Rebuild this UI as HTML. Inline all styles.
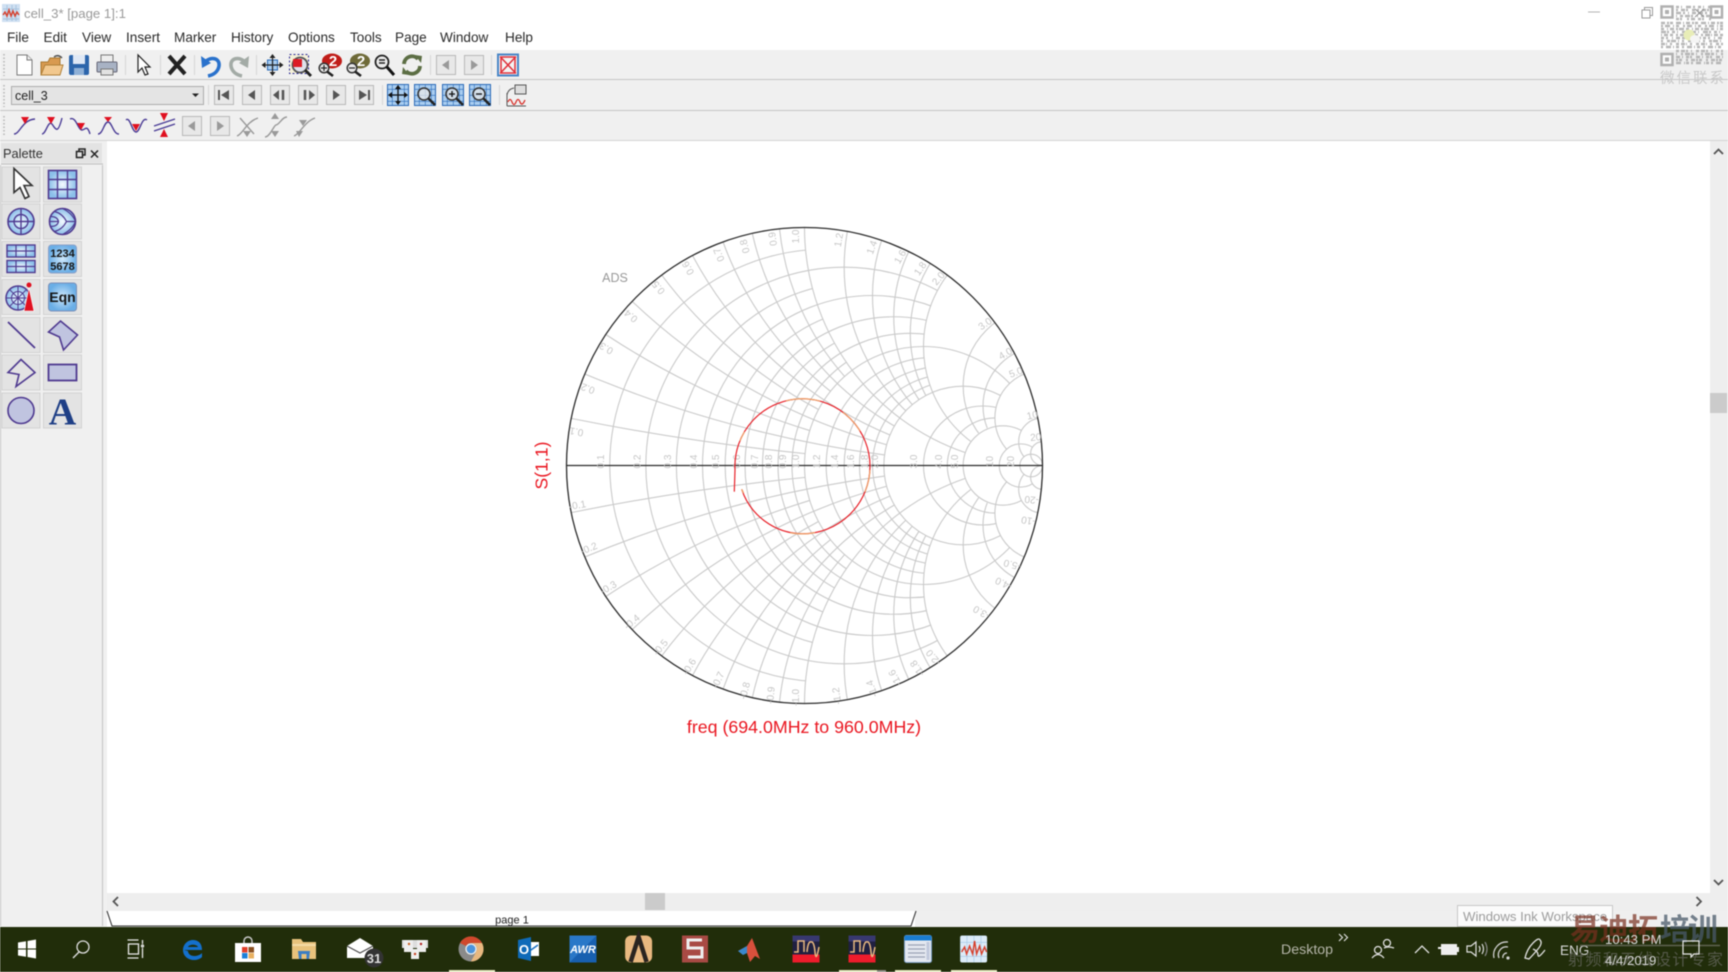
<!DOCTYPE html>
<html lang="en"><head><meta charset="utf-8"><title>cell_3* [page 1]:1</title>
<style>
html,body{margin:0;padding:0;background:#fff;width:1728px;height:972px;overflow:hidden}
svg{display:block;filter:blur(.4px)}
text{font-family:"Liberation Sans","Noto Sans CJK SC",sans-serif}
.m{font-size:13.6px;fill:#2a2a2a}
.g circle,.g path{fill:none;stroke:#cacaca;stroke-width:1.1;vector-effect:non-scaling-stroke}
.l text{font-size:10px;fill:#c6c6c6;text-anchor:middle}
.tb{font-size:13.2px;fill:#d8d8d8}
</style></head><body>
<svg width="1728" height="972" viewBox="0 0 1728 972" xmlns="http://www.w3.org/2000/svg">
<defs>
<radialGradient id="lb"><stop offset="0" stop-color="#f4faff"/><stop offset="1" stop-color="#8cc0ea"/></radialGradient>
<radialGradient id="lb2"><stop offset="0" stop-color="#cfe8fb"/><stop offset="1" stop-color="#6aaee6"/></radialGradient>
<pattern id="gr" width="6" height="6" patternUnits="userSpaceOnUse"><rect width="6" height="6" fill="#a9cdf0"/><path d="M0 0H6M0 0V6" stroke="#2a6ab8" stroke-width="1.2"/></pattern>
<pattern id="wg" width="7" height="7" patternUnits="userSpaceOnUse"><rect width="7" height="7" fill="#dcebf8"/><path d="M0 0H7M0 0V7" stroke="#a9cbe8" stroke-width="1.4"/></pattern>
<clipPath id="uc"><circle r="1"/></clipPath>
<clipPath id="x1"><path clip-rule="evenodd" d="M-2-2H2V2H-2ZM0 1a1 1 0 1 0 2 0a1 1 0 1 0-2 0ZM0-1a1 1 0 1 0 2 0a1 1 0 1 0-2 0Z"/></clipPath>
<clipPath id="x2"><path clip-rule="evenodd" d="M-2-2H2V2H-2ZM.5 .5a.5 .5 0 1 0 1 0a.5 .5 0 1 0-1 0ZM.5-.5a.5 .5 0 1 0 1 0a.5 .5 0 1 0-1 0Z"/></clipPath>
<clipPath id="x5"><path clip-rule="evenodd" d="M-2-2H2V2H-2ZM.8 .2a.2 .2 0 1 0 .4 0a.2 .2 0 1 0-.4 0ZM.8-.2a.2 .2 0 1 0 .4 0a.2 .2 0 1 0-.4 0Z"/></clipPath>
<clipPath id="x10"><path clip-rule="evenodd" d="M-2-2H2V2H-2ZM.9 .1a.1 .1 0 1 0 .2 0a.1 .1 0 1 0-.2 0ZM.9-.1a.1 .1 0 1 0 .2 0a.1 .1 0 1 0-.2 0Z"/></clipPath>
<clipPath id="x20"><path clip-rule="evenodd" d="M-2-2H2V2H-2ZM.95 .05a.05 .05 0 1 0 .1 0a.05 .05 0 1 0-.1 0ZM.95-.05a.05 .05 0 1 0 .1 0a.05 .05 0 1 0-.1 0Z"/></clipPath>
<clipPath id="r2"><path clip-rule="evenodd" d="M-2-2H2V2H-2ZM.3333 0a.3333 .3333 0 1 0 .6667 0a.3333 .3333 0 1 0-.6667 0Z"/></clipPath>
<clipPath id="r5"><path clip-rule="evenodd" d="M-2-2H2V2H-2ZM.6667 0a.1667 .1667 0 1 0 .3333 0a.1667 .1667 0 1 0-.3333 0Z"/></clipPath>
<clipPath id="r10"><path clip-rule="evenodd" d="M-2-2H2V2H-2ZM.8182 0a.0909 .0909 0 1 0 .1818 0a.0909 .0909 0 1 0-.1818 0Z"/></clipPath>
<clipPath id="r20"><path clip-rule="evenodd" d="M-2-2H2V2H-2ZM.9048 0a.0476 .0476 0 1 0 .0952 0a.0476 .0476 0 1 0-.0952 0Z"/></clipPath>
<symbol id="btn" overflow="visible"><rect x="-9.5" y="-9.5" width="19" height="19" fill="#e8e8e8" stroke="#b8b8b8"/></symbol>
<symbol id="mag" overflow="visible"><circle cx="-1" cy="-1" r="6" fill="#e8e8e8" fill-opacity=".75" stroke="#333" stroke-width="1.5"/><path d="M3.5 3.5L10 10" stroke="#222" stroke-width="2.6"/></symbol>
<symbol id="pal" overflow="visible"><rect x="-19" y="-17.5" width="38" height="35" fill="#e3e3e3" stroke="#d2d2d2"/></symbol>
</defs>

<rect width="1728" height="972" fill="#fff"/>

<!-- title bar -->
<g transform="translate(2 4)"><rect width="18" height="18" fill="#cfe0f2"/><path d="M1 5H17M1 10H17M1 15H17M5 1V17M10 1V17M14 1V17" stroke="#a9c4df"/><path d="M1 11L3 8L5 12L7 6L9 12L11 7L13 12L15 8L17 11" fill="none" stroke="#d9402c" stroke-width="1.4"/></g>
<text x="24" y="18" font-size="13.2" fill="#9a9a9a">cell_3* [page 1]:1</text>
<path d="M1588 12H1600" stroke="#b4b4b4"/>
<path d="M1642 10h8v8h-8zM1644.500 10V7.500h8v8h-2.500" fill="none" stroke="#9a9a9a"/>

<!-- menu -->
<text class="m" x="7" y="42">File</text><text class="m" x="43.500" y="42">Edit</text><text class="m" x="82" y="42">View</text><text class="m" x="126" y="42">Insert</text><text class="m" x="174" y="42">Marker</text><text class="m" x="231" y="42">History</text><text class="m" x="288" y="42">Options</text><text class="m" x="350" y="42">Tools</text><text class="m" x="395" y="42">Page</text><text class="m" x="440" y="42">Window</text><text class="m" x="505" y="42">Help</text>

<!-- toolbars -->
<rect y="50" width="1728" height="91" fill="#f0f0f0"/>
<path d="M0 79.500H1728M0 110.500H1728" stroke="#c6c6c6"/><path d="M0 140.500H1728" stroke="#d4d4d4"/>
<path d="M4 54V76M4 85V107M4 116V137" stroke="#b4b4b4" stroke-dasharray="1.500 2" stroke-width="1.500"/>
<path d="M125.500 55V75M160.500 55V75M194.500 55V75M256.500 55V75M430.500 55V75M491.500 55V75M208.500 85V105M382.500 85V105M499.500 85V105" stroke="#d6d6d6"/>

<!-- toolbar 1 -->
<g transform="translate(24 65)"><path d="M-7-10H3L8-5V10H-7Z" fill="#fff" stroke="#7a7a7a"/><path d="M3-10V-5H8" fill="#eee" stroke="#7a7a7a"/></g>
<g transform="translate(52 65)"><path d="M-11-3H-4L-2-7H8V9H-11Z" fill="#d89a50" stroke="#a87830"/><path d="M-11 10L-7 0H11L8 10Z" fill="#f2c88e" stroke="#b08038"/><path d="M2-8Q6-11 10-7" fill="none" stroke="#555" stroke-width="1.500"/></g>
<g transform="translate(79 65)"><rect x="-10" y="-10" width="20" height="20" rx="2" fill="#2c65ab"/><rect x="-6" y="-10" width="12" height="9" fill="#dfe8f5"/><rect x="-5" y="3" width="10" height="7" fill="#8fb0d6"/></g>
<g transform="translate(107 65)"><rect x="-6" y="-10" width="12" height="8" fill="#eee" stroke="#777"/><rect x="-10" y="-3" width="20" height="10" rx="1" fill="#a8b2c4" stroke="#667"/><rect x="-6" y="4" width="12" height="6" fill="#e2e2e2" stroke="#777"/></g>
<g transform="translate(143 65)"><path d="M-5-10V7L-1 3L2 10L5 9L2 2L7 2Z" fill="#fff" stroke="#222" stroke-width="1.200"/></g>
<g transform="translate(177 65)"><path d="M-8-9L8 9M8-9L-8 9" stroke="#222" stroke-width="4"/></g>
<g transform="translate(211 65)"><path d="M-6-3C0-9 9-7 8 1C7 7 2 10-3 11" fill="none" stroke="#2a72cc" stroke-width="3.600"/><path d="M-10-9L-9 3L0-2Z" fill="#2a72cc"/></g>
<g transform="translate(239 65)"><path d="M6-3C0-9-9-7-8 1C-7 7-2 10 3 11" fill="none" stroke="#a3aba6" stroke-width="3.600"/><path d="M10-9L9 3L0-2Z" fill="#a3aba6"/></g>
<g transform="translate(272.500 65)"><rect x="-5" y="-5" width="10" height="10" fill="url(#gr)" stroke="#2a6ab8"/><path d="M-9 0H9M0-9V9" stroke="#222" stroke-width="1.200"/><path d="M-11 0L-7-3V3ZM11 0L7-3V3ZM0-11L-3-7H3ZM0 11L-3 7H3Z" fill="#222"/></g>
<g transform="translate(300 65)"><rect x="-10.500" y="-10.500" width="19" height="19" fill="#f4f0d8" stroke="#2a2a9a" stroke-dasharray="2 2"/><circle cx="0" cy="0" r="7.500" fill="#dfe2ec" stroke="#555" stroke-width="1.800"/><path d="M-7-6H2V2H-7Z" fill="#dc1c24"/><path d="M5 5L11 11" stroke="#222" stroke-width="2.800"/></g>
<g transform="translate(329 65)"><ellipse cx="3" cy="-4" rx="10" ry="7.500" fill="#c01c18"/><text x="4" y="1" font-size="15" font-weight="bold" fill="#fff" text-anchor="middle">2</text><circle cx="-5" cy="3" r="4.800" fill="#e8e8e8" stroke="#333" stroke-width="1.500"/><path d="M-8 3H-2M-5 0V6" stroke="#222" stroke-width="1.200"/><path d="M-2 6.500L4 11" stroke="#222" stroke-width="2.600"/></g>
<g transform="translate(357 65)"><ellipse cx="3" cy="-4" rx="10" ry="7.500" fill="#6e6a38"/><text x="4" y="1" font-size="15" font-weight="bold" fill="#fff" text-anchor="middle">2</text><circle cx="-5" cy="3" r="4.800" fill="#e8e8e8" stroke="#333" stroke-width="1.500"/><path d="M-8 3H-2" stroke="#222" stroke-width="1.200"/><path d="M-2 6.500L4 11" stroke="#222" stroke-width="2.600"/></g>
<g transform="translate(384 65)"><circle cx="-2" cy="-3" r="6.500" fill="#ececec" stroke="#222" stroke-width="1.800"/><path d="M-5-5H1M-5-2H1" stroke="#222" stroke-width="1.400"/><path d="M3 2L10 10" stroke="#111" stroke-width="3"/></g>
<g transform="translate(412 65)" fill="none" stroke="#5c6e44" stroke-width="3.800"><path d="M-8-1A8 8 0 0 1 6-6"/><path d="M8 1A8 8 0 0 1-6 6"/><path d="M3-10L10-9L9-2Z" fill="#5c6e44" stroke="none"/><path d="M-3 10L-10 9L-9 2Z" fill="#5c6e44" stroke="none"/></g>
<g transform="translate(446 65)"><use href="#btn"/><path d="M3-5V5L-4 0Z" fill="#999"/></g>
<g transform="translate(474 65)"><use href="#btn"/><path d="M-3-5V5L4 0Z" fill="#999"/></g>
<g transform="translate(508 65)"><rect x="-10" y="-10.500" width="20" height="21" fill="#f4f4f4" stroke="#4a86c6" stroke-width="2"/><path d="M-8-8.500L8 8.500M8-8.500L-8 8.500M-7-8H7V8H-7Z" fill="none" stroke="#e0303a" stroke-width="1.500"/></g>

<!-- toolbar 2 -->
<rect x="11.500" y="86.500" width="192" height="18" fill="#e4e4e4" stroke="#adadad"/>
<text x="15" y="100" font-size="12.500" fill="#222">cell_3</text>
<path d="M192 93.500H199L195.500 97Z" fill="#222"/>
<g transform="translate(224 95)"><use href="#btn"/><path d="M-5-5V5" stroke="#555" stroke-width="2"/><path d="M5-5V5L-3 0Z" fill="#555"/></g>
<g transform="translate(252 95)"><use href="#btn"/><path d="M3-5V5L-4 0Z" fill="#555"/></g>
<g transform="translate(280 95)"><use href="#btn"/><path d="M-1-5V5L-7 0Z" fill="#555"/><path d="M3-5V5" stroke="#555" stroke-width="2.500"/></g>
<g transform="translate(308 95)"><use href="#btn"/><path d="M1-5V5L7 0Z" fill="#555"/><path d="M-3-5V5" stroke="#555" stroke-width="2.500"/></g>
<g transform="translate(336 95)"><use href="#btn"/><path d="M-3-5V5L4 0Z" fill="#555"/></g>
<g transform="translate(364 95)"><use href="#btn"/><path d="M-5-5V5L3 0Z" fill="#555"/><path d="M5-5V5" stroke="#555" stroke-width="2"/></g>
<g transform="translate(398 95)"><rect x="-10.500" y="-10.500" width="21" height="21" fill="url(#gr)" stroke="#2a6ab8"/><path d="M-8 0H8M0-8V8" stroke="#111" stroke-width="1.300"/><path d="M-10 0L-6-3V3ZM10 0L6-3V3ZM0-10L-3-6H3ZM0 10L-3 6H3Z" fill="#111"/></g>
<g transform="translate(425 95)"><rect x="-10.500" y="-10.500" width="21" height="21" fill="url(#gr)" stroke="#2a6ab8"/><use href="#mag"/></g>
<g transform="translate(453 95)"><rect x="-10.500" y="-10.500" width="21" height="21" fill="url(#gr)" stroke="#2a6ab8"/><use href="#mag"/><path d="M-4-1H2M-1-4V2" stroke="#111" stroke-width="1.300"/></g>
<g transform="translate(480 95)"><rect x="-10.500" y="-10.500" width="21" height="21" fill="url(#gr)" stroke="#2a6ab8"/><use href="#mag"/><path d="M-4-1H2" stroke="#111" stroke-width="1.300"/></g>
<g transform="translate(516 95)"><path d="M-9 11V-2M-9 11H10" stroke="#555" fill="none"/><rect x="-1" y="-10" width="11" height="9" fill="#ddd" stroke="#555"/><path d="M-8 7Q-6 2-4 7T0 7T4 7T9 5" fill="none" stroke="#d8302a" stroke-width="1.300"/><path d="M-9 0Q-8-6-2-7" fill="none" stroke="#555"/></g>

<!-- toolbar 3 -->
<g fill="none" stroke="#4a3c96" stroke-width="1.400">
<path d="M14 134C20 134 22 120 35 119"/><path d="M42 134C46 134 48 120 52 124C56 130 58 134 62 118"/><path d="M70 119C76 116 78 130 82 130C85 130 87 124 90 134"/><path d="M98 134C103 134 104 122 108 122C112 122 113 134 119 134"/><path d="M126 120C130 116 132 132 136 132C140 132 142 116 147 120"/><path d="M154 126L175 119M154 131L175 124"/>
</g>
<path d="M21 117H29L25 124ZM47 117H55L51 124ZM77 123H85L81 130ZM104 117H112L108 122ZM132 124H140L136 131ZM160 113H168L164 121ZM160 137H168L164 129Z" fill="#e01020"/>
<g transform="translate(192 126)"><use href="#btn"/><path d="M3-5V5L-4 0Z" fill="#999"/></g>
<g transform="translate(220 126)"><use href="#btn"/><path d="M-3-5V5L4 0Z" fill="#999"/></g>
<g fill="none" stroke="#9a9a9a" stroke-width="1.400"><path d="M237 136C243 134 246 122 258 118"/><path d="M240 118L254 134"/><path d="M265 137C270 137 274 125 276 125C280 124 282 117 287 117"/><path d="M294 136C300 134 304 122 315 118"/></g>
<path d="M243 131H251L247 137ZM271 119H279L275 113ZM271 131H279L275 137ZM299 120H307L303 126ZM296 131H303L299 137Z" fill="#9a9a9a"/>

<!-- QR / watermark top right -->
<g opacity=".9">
<g fill="none" stroke="#b0b0b0" stroke-width="2.600">
<path d="M1676 7H1712" stroke-dasharray="3 2 1 4 5 2 2 3"/><path d="M1676 10H1712" stroke-dasharray="2 3 4 1 2 4 3 2"/><path d="M1676 13H1712" stroke-dasharray="5 2 2 3 1 3 4 2"/><path d="M1676 16H1712" stroke-dasharray="1 3 3 2 5 1 2 4"/><path d="M1676 19H1712" stroke-dasharray="3 1 2 5 2 2 4 3"/>
<path d="M1661 23H1723" stroke-dasharray="4 2 2 1 3 3 5 2 1 2"/><path d="M1661 26H1723" stroke-dasharray="2 2 5 3 1 2 3 4"/><path d="M1661 29H1723" stroke-dasharray="3 3 1 2 4 2 2 1 5 2"/><path d="M1661 32H1723" stroke-dasharray="5 1 2 3 3 2 1 4"/><path d="M1661 35H1723" stroke-dasharray="1 2 4 2 3 3 2 2 5 1"/><path d="M1661 38H1723" stroke-dasharray="3 2 2 4 1 3 4 2"/><path d="M1661 41H1723" stroke-dasharray="2 4 3 1 5 2 1 3"/><path d="M1661 44H1723" stroke-dasharray="4 1 1 3 2 4 3 2"/><path d="M1661 47H1723" stroke-dasharray="2 3 5 2 1 2 3 3"/>
<path d="M1676 51H1723" stroke-dasharray="3 2 4 1 2 3 1 4"/><path d="M1676 54H1723" stroke-dasharray="1 4 2 2 5 1 3 2"/><path d="M1676 57H1723" stroke-dasharray="4 2 1 3 3 1 2 4"/><path d="M1676 60H1723" stroke-dasharray="2 1 3 4 2 3 4 1"/><path d="M1676 63H1723" stroke-dasharray="5 3 1 1 3 2 2 3"/>
</g>
<g fill="#fff" stroke="#a8a8a8" stroke-width="2.500"><rect x="1661.500" y="6.500" width="11" height="11"/><rect x="1711" y="6.500" width="11" height="11"/><rect x="1661.500" y="54" width="11" height="11"/></g>
<path d="M1665 10h4v4h-4zM1714.500 10h4v4h-4zM1665 57.500h4v4h-4z" fill="#a8a8a8"/>
<circle cx="1689" cy="35" r="5.500" fill="#e6ecb0"/><ellipse cx="1695" cy="39" rx="5" ry="4" fill="#f4f4f4"/>
<path d="M1695 9L1704 17M1704 9L1695 17" stroke="#888"/>
</g>
<text x="1660" y="83" font-size="14.500" fill="#c8c8c8" textLength="64" lengthAdjust="spacing">微信联系</text>

<!-- canvas -->
<rect x="1710" y="141" width="18" height="752" fill="#eeeeee"/>
<path d="M1714 154L1718.500 149.500L1723 154" fill="none" stroke="#555" stroke-width="1.800"/>
<rect x="1710" y="393" width="17" height="20" fill="#cbcbcb"/>
<path d="M1714 880L1718.500 884.500L1723 880" fill="none" stroke="#555" stroke-width="1.800"/>

<!-- palette -->
<rect y="141" width="107" height="786" fill="#f0f0f0"/>
<path d="M102.500 165V926M.5 165V926" stroke="#c4c4c4"/>
<rect x="1" y="143" width="101" height="20" fill="#e3e3e3"/>
<path d="M1 164H103" stroke="#bdbdbd"/>
<text x="3" y="158" font-size="12.800" fill="#333">Palette</text>
<path d="M76.500 151.500h6v6h-6zM79 151.500V149h6v6h-2.500" fill="none" stroke="#222" stroke-width="1.500"/>
<path d="M91 150.500L98 157.500M98 150.500L91 157.500" stroke="#222" stroke-width="1.500"/>

<g transform="translate(21 184.500)"><use href="#pal"/><path d="M-7-16V8L-1 3L4 14L8 12L3 1L11 1Z" fill="#fff" stroke="#333" stroke-width="1.600"/></g>
<g transform="translate(62.500 184.500)"><use href="#pal"/><rect x="-14" y="-14" width="28" height="28" fill="url(#lb)" stroke="#4f3a90" stroke-width="1.600"/><path d="M-14-5H14M-14 5H14M-5-14V14M5-14V14" stroke="#4f3a90" stroke-width="1.400"/></g>
<g transform="translate(21 221.500)"><use href="#pal"/><circle r="13" fill="url(#lb)" stroke="#4f3a90" stroke-width="1.600"/><circle r="7" fill="none" stroke="#4f3a90" stroke-width="1.400"/><path d="M-13 0H13M0-13V13" stroke="#4f3a90" stroke-width="1.400"/></g>
<g transform="translate(62.500 221.500)"><use href="#pal"/><circle r="13" fill="url(#lb)" stroke="#4f3a90" stroke-width="1.600"/><path d="M-13 0H-4M4 0L13 0M0-13Q10-8 13 0Q10 8 0 13M-8-10Q0-8 4 0Q0 8-8 10M-12-5Q-5-5-4 0Q-5 5-12 5" fill="none" stroke="#4f3a90" stroke-width="1.200"/></g>
<g transform="translate(21 259)"><use href="#pal"/><g fill="url(#lb)" stroke="#4f3a90" stroke-width="1.400"><rect x="-14" y="-14" width="28" height="12"/><rect x="-14" y="1.500" width="28" height="12"/></g><path d="M-14-8H14M-14 7.500H14M-5-14V-2M5-14V-2M-5 1.500V13.500M5 1.500V13.500" stroke="#4f3a90" stroke-width="1.200"/></g>
<g transform="translate(62.500 259)"><use href="#pal"/><rect x="-14" y="-14" width="28" height="28" rx="3" fill="url(#lb2)" stroke="#8aa0c8"/><text y="-2" font-size="11" font-weight="bold" fill="#161616" text-anchor="middle">1234</text><text y="11" font-size="11" font-weight="bold" fill="#161616" text-anchor="middle">5678</text></g>
<g transform="translate(21 297)"><use href="#pal"/><circle cx="-3" cy="1" r="12" fill="url(#lb)" stroke="#4f3a90" stroke-width="1.500"/><circle cx="-3" cy="1" r="6.500" fill="none" stroke="#4f3a90"/><path d="M-15 1H9M-3-11V13M-11-7L5 9M5-7L-11 9" stroke="#4f3a90"/><path d="M8-9L13 14H3Z" fill="#e01020" stroke="#fff" stroke-width=".6"/><circle cx="8" cy="-12" r="2.500" fill="#e01020"/></g>
<g transform="translate(62.500 297)"><use href="#pal"/><rect x="-14" y="-14" width="28" height="28" rx="3" fill="url(#lb2)" stroke="#7a90b8"/><text y="5" font-size="14" font-weight="bold" fill="#161616" text-anchor="middle">Eqn</text></g>
<g transform="translate(21 335)"><use href="#pal"/><path d="M-13-13L14 13" stroke="#4f3a90" stroke-width="1.800"/></g>
<g transform="translate(62.500 335)"><use href="#pal"/><path d="M-2-14L15 0L1 15L-3 2L-14-3Z" fill="#c0c4e0" stroke="#4f3a90" stroke-width="1.600"/></g>
<g transform="translate(21 372.500)"><use href="#pal"/><path d="M0-13L14 0L-5 14L-2 2L-13 0Z" fill="none" stroke="#4f3a90" stroke-width="1.600"/></g>
<g transform="translate(62.500 372.500)"><use href="#pal"/><rect x="-14" y="-8" width="28" height="16" fill="#c0c4e0" stroke="#4f3a90" stroke-width="1.800"/></g>
<g transform="translate(21 410.500)"><use href="#pal"/><circle r="13" fill="#c0c4e0" stroke="#4f3a90" stroke-width="1.600"/></g>
<g transform="translate(62.500 410.500)"><use href="#pal"/><text y="14" font-size="38" font-weight="bold" text-anchor="middle" fill="#1f3f86" style="font-family:'Liberation Serif',serif">A</text></g>

<!-- Smith chart -->
<g transform="translate(804.500 465.500) scale(238 -238)">
<g clip-path="url(#uc)"><g class="g">
<g clip-path="url(#x1)"><circle cx=".0909" r=".9091"/><circle cx=".2308" r=".7692"/><circle cx=".3333" r=".6667"/><circle cx=".4118" r=".5882"/><circle cx=".4737" r=".5263"/></g>
<g clip-path="url(#x2)"><circle cx=".1667" r=".8333"/><circle cx=".2857" r=".7143"/><circle cx=".375" r=".625"/><circle cx=".4444" r=".5556"/><circle cx=".5455" r=".4545"/><circle cx=".5833" r=".4167"/><circle cx=".6154" r=".3846"/><circle cx=".6429" r=".3571"/></g>
<g clip-path="url(#x5)"><circle cx=".5" r=".5"/><circle cx=".6667" r=".3333"/><circle cx=".75" r=".25"/><circle cx=".8" r=".2"/></g>
<g clip-path="url(#x10)"><circle cx=".8333" r=".1667"/></g>
<g clip-path="url(#x20)"><circle cx=".9091" r=".0909"/></g>
<circle cx=".9524" r=".0476"/>
<!-- reactance arcs, r<=1 (odd) -->
<path d="M-.9802 .198A10 10 0 0 1 .0025 .0499"/><path d="M-.9802 -.198A10 10 0 0 0 .0025 -.0499"/>
<path d="M-.8349 .5505A3.3333 3.3333 0 0 1 .022 .1467"/><path d="M-.8349 -.5505A3.3333 3.3333 0 0 0 .022 -.1467"/>
<path d="M-.6 .8A2 2 0 0 1 .0588 .2353"/><path d="M-.6 -.8A2 2 0 0 0 .0588 -.2353"/>
<path d="M-.3423 .9396A1.4286 1.4286 0 0 1 .1091 .3118"/><path d="M-.3423 -.9396A1.4286 1.4286 0 0 0 .1091 -.3118"/>
<path d="M-.105 .9945A1.1111 1.1111 0 0 1 .1684 .3742"/><path d="M-.105 -.9945A1.1111 1.1111 0 0 0 .1684 -.3742"/>
<!-- reactance arcs, r<=2 (even) -->
<path d="M-.9231 .3846A5 5 0 0 1 .3363 .0442"/><path d="M-.9231 -.3846A5 5 0 0 0 .3363 -.0442"/>
<path d="M-.7241 .6897A2.5 2.5 0 0 1 .345 .0873"/><path d="M-.7241 -.6897A2.5 2.5 0 0 0 .345 -.0873"/>
<path d="M-.4706 .8824A1.6667 1.6667 0 0 1 .359 .1282"/><path d="M-.4706 -.8824A1.6667 1.6667 0 0 0 .359 -.1282"/>
<path d="M-.2195 .9756A1.25 1.25 0 0 1 .3776 .166"/><path d="M-.2195 -.9756A1.25 1.25 0 0 0 .3776 -.166"/>
<!-- x=1, r<=5 -->
<path d="M0 1A1 1 0 0 1 .6757 .0541"/><path d="M0 -1A1 1 0 0 0 .6757 -.0541"/>
<g clip-path="url(#r2)"><circle cx="1" cy=".8333" r=".8333"/><circle cx="1" cy="-.8333" r=".8333"/><circle cx="1" cy=".7143" r=".7143"/><circle cx="1" cy="-.7143" r=".7143"/><circle cx="1" cy=".625" r=".625"/><circle cx="1" cy="-.625" r=".625"/><circle cx="1" cy=".5556" r=".5556"/><circle cx="1" cy="-.5556" r=".5556"/></g>
<g clip-path="url(#r5)"><circle cx="1" cy=".5" r=".5"/><circle cx="1" cy="-.5" r=".5"/><circle cx="1" cy=".3333" r=".3333"/><circle cx="1" cy="-.3333" r=".3333"/><circle cx="1" cy=".25" r=".25"/><circle cx="1" cy="-.25" r=".25"/></g>
<g clip-path="url(#r10)"><circle cx="1" cy=".2" r=".2"/><circle cx="1" cy="-.2" r=".2"/></g>
<g clip-path="url(#r20)"><circle cx="1" cy=".1" r=".1"/><circle cx="1" cy="-.1" r=".1"/></g>
<circle cx="1" cy=".05" r=".05"/><circle cx="1" cy="-.05" r=".05"/>
</g></g>
</g>
<circle cx="804.500" cy="465.500" r="238" fill="none" stroke="#2c2c2c" stroke-width="1.300"/>
<path d="M566.500 465.500H1043" stroke="#2a2a2a" stroke-width="1.300"/>

<g class="l" transform="translate(0 3.500)">
<text transform="translate(604 458) rotate(-90)">0.1</text><text transform="translate(640.700 458) rotate(-90)">0.2</text><text transform="translate(671 458) rotate(-90)">0.3</text><text transform="translate(697 458) rotate(-90)">0.4</text><text transform="translate(719 458) rotate(-90)">0.5</text><text transform="translate(740 458) rotate(-90)">0.6</text><text transform="translate(758 458) rotate(-90)">0.7</text><text transform="translate(772 458) rotate(-90)">0.8</text><text transform="translate(786 458) rotate(-90)">0.9</text><text transform="translate(799 458) rotate(-90)">1.0</text><text transform="translate(820 458) rotate(-90)">1.2</text><text transform="translate(838 458) rotate(-90)">1.4</text><text transform="translate(854 458) rotate(-90)">1.6</text><text transform="translate(868 458) rotate(-90)">1.8</text><text transform="translate(878 458) rotate(-90)">2.0</text><text transform="translate(917 458) rotate(-90)">3.0</text><text transform="translate(942 458) rotate(-90)">4.0</text><text transform="translate(958 458) rotate(-90)">5.0</text><text transform="translate(993 458) rotate(-90)">10</text><text transform="translate(1014 458) rotate(-90)">20</text>
<text transform="translate(577 425) rotate(-170)">0.1</text><text transform="translate(589 382) rotate(-160)">0.2</text><text transform="translate(608 342) rotate(-150)">0.3</text><text transform="translate(633 310) rotate(-140)">0.4</text><text transform="translate(661 282) rotate(-130)">0.5</text><text transform="translate(691 263) rotate(-120)">0.6</text><text transform="translate(722 250) rotate(-113)">0.7</text><text transform="translate(748 242) rotate(-105)">0.8</text><text transform="translate(776 235) rotate(-98)">0.9</text><text transform="translate(799 233) rotate(-90)">1.0</text><text transform="translate(842 237) rotate(-80)">1.2</text><text transform="translate(875 245) rotate(-70)">1.4</text><text transform="translate(903 255) rotate(-60)">1.6</text><text transform="translate(923 267) rotate(-55)">1.8</text><text transform="translate(941 277) rotate(-50)">2.0</text><text transform="translate(987 323) rotate(-35)">3.0</text><text transform="translate(1007 353) rotate(-30)">4.0</text><text transform="translate(1017 372) rotate(-20)">5.0</text><text transform="translate(1033 415) rotate(-12)">10</text><text transform="translate(1036 437) rotate(-5)">20</text>
<text transform="translate(578 505) rotate(-10)">-0.1</text><text transform="translate(590 548) rotate(-22)">-0.2</text><text transform="translate(610 587) rotate(-30)">-0.3</text><text transform="translate(634 621) rotate(-40)">-0.4</text><text transform="translate(663 646) rotate(-50)">-0.5</text><text transform="translate(692 665) rotate(-58)">-0.6</text><text transform="translate(721 678) rotate(-65)">-0.7</text><text transform="translate(748 688) rotate(-75)">-0.8</text><text transform="translate(774 692) rotate(-85)">-0.9</text><text transform="translate(799 694) rotate(-90)">-1.0</text><text transform="translate(840 692) rotate(-98)">-1.2</text><text transform="translate(875 684) rotate(-110)">-1.4</text><text transform="translate(898 673) rotate(-118)">-1.6</text><text transform="translate(920 663) rotate(-125)">-1.8</text><text transform="translate(936 652) rotate(-130)">-2.0</text><text transform="translate(983 606) rotate(-150)">-3.0</text><text transform="translate(1005 577) rotate(-155)">-4.0</text><text transform="translate(1013 558) rotate(-165)">-5.0</text><text transform="translate(1029 514) rotate(-170)">-10</text><text transform="translate(1032 493) rotate(-175)">-20</text>
</g>
<text x="615" y="282" font-size="12.500" fill="#999" text-anchor="middle">ADS</text>

<!-- trace -->
<path d="M734.300 491.700L735 470A67.500 67.500 0 0 1 802.500 398.800A67.500 67.500 0 0 1 870 466.300A67.500 67.500 0 0 1 802 533.800A65 65 0 0 1 741.700 489.300" fill="none" stroke="#e8222a" stroke-width="1.200"/>
<path d="M741.700 489.300L743.500 493" fill="none" stroke="#eda068" stroke-width="1.400"/>
<path d="M786 400.900A67.500 67.500 0 0 1 820 401.100M843 412.300A67.500 67.500 0 0 1 860 430.900M870 470A67.500 67.500 0 0 1 865 491.800M815 532.600A67.500 67.500 0 0 1 790 532.800M740 440.800A67.500 67.500 0 0 1 744.500 431.800" fill="none" stroke="#eda068" stroke-width="1.200"/>
<text transform="translate(547.500 465.500) rotate(-90)" font-size="17.600" fill="#ea1620" text-anchor="middle">S(1,1)</text>
<text x="804" y="733" font-size="17.800" fill="#ea1620" text-anchor="middle">freq (694.0MHz to 960.0MHz)</text>

<!-- horizontal scrollbar + tabs -->
<rect x="107" y="893" width="1603" height="18" fill="#eeeeee"/>
<rect x="1710" y="893" width="18" height="34" fill="#eeeeee"/>
<path d="M118 897L113.500 901.500L118 906" fill="none" stroke="#555" stroke-width="1.800"/>
<path d="M1696.500 897L1701 901.500L1696.500 906" fill="none" stroke="#555" stroke-width="1.800"/>
<rect x="645" y="893" width="20" height="17" fill="#cbcbcb"/>
<rect x="915" y="911" width="813" height="16" fill="#efefef"/>
<path d="M107 911L112 926H911L916 911" fill="none" stroke="#333" stroke-width="1.100"/>
<text x="512" y="923.500" font-size="11" fill="#222" text-anchor="middle">page 1</text>

<rect x="1457.500" y="905.500" width="155" height="21" fill="#fbfbfb" stroke="#c8c8c8"/>
<text x="1463" y="921" font-size="13.200" fill="#9c9c9c">Windows Ink Workspace</text>

<!-- taskbar -->
<rect y="927" width="1728" height="45" fill="#212d0a"/>
<g transform="translate(27 949)"><path d="M-9-6.500L-1-7.800V-.5H-9ZM.5-8L9-9.500V-.5H.5ZM-9 .5H-1V7.800L-9 6.500ZM.5 .5H9V9.500L.5 8Z" fill="#fff"/></g>
<g transform="translate(81 949)"><circle cx="2" cy="-2" r="6" fill="none" stroke="#ddd" stroke-width="1.300"/><path d="M-2 3L-8 9" stroke="#ddd" stroke-width="1.400"/></g>
<g transform="translate(134.500 949)" fill="none" stroke="#e8e8e8" stroke-width="1.300"><rect x="-6" y="-5" width="10" height="10"/><path d="M-7-9H4M-7 9H4M8-9V-5M8-1V9"/><circle cx="8" cy="-3" r="1"/></g>
<g transform="translate(193 949)"><path d="M-9 1H9C9-6 5-9 0-9C-6-9-10-4-10 1C-10 7-5 11 1 11C4 11 7 10 9 8V4C7 6 4 7 1 7C-2 7-5 5-5 2M-5-2C-4-5 4-5 5-2Z" fill="#1470cc"/></g>
<g transform="translate(248 949)"><path d="M-4-5V-8A4 4 0 0 1 4-8V-5" fill="none" stroke="#c8c8c8" stroke-width="1.500"/><rect x="-13" y="-6" width="26" height="19" fill="#fff"/><rect x="-6" y="-2" width="5.500" height="5.500" fill="#e0402a"/><rect x=".5" y="-2" width="5.500" height="5.500" fill="#8a5020"/><rect x="-6" y="4" width="5.500" height="5.500" fill="#1a80d8"/><rect x=".5" y="4" width="5.500" height="5.500" fill="#e8b060"/></g>
<g transform="translate(304 949)"><path d="M-12-10H-3L-1-7H12V10H-12Z" fill="#e8c27c"/><rect x="-12" y="-5" width="24" height="2" fill="#f4dca8"/><path d="M-6 2H6L5 10H-5Z" fill="#3b7ec4"/><rect x="-2.500" y="5" width="5" height="5" fill="#e8c27c"/></g>
<g transform="translate(360 949)"><path d="M-13-3L0-11L13-3V9H-13Z" fill="#fff"/><path d="M-13-3L0 4L13-3" fill="none" stroke="#444"/><circle cx="14" cy="9" r="9.500" fill="#333"/><text x="14" y="14" font-size="13" font-weight="bold" fill="#ddd" text-anchor="middle">31</text></g>
<g transform="translate(415 949)"><rect x="-13" y="-9" width="26" height="8" fill="#ddd"/><rect x="-11" y="-9" width="9" height="12" fill="#eee"/><rect x="2" y="-9" width="9" height="12" fill="#eee"/><rect x="-4" y="0" width="8" height="10" fill="#eee"/><circle cx="-6" cy="-5" r="1.200" fill="#c86020"/><circle cx="6" cy="-5" r="1.200" fill="#b02020"/><circle cx="0" cy="5" r="1.200" fill="#c84020"/></g>
<g transform="translate(471 949)"><circle r="12.500" fill="#8a8a8a"/><path d="M-11-6A12.500 12.500 0 0 1 11-6H0A6 6 0 0 0-5-3Z" fill="#d0482c"/><path d="M11-6A12.500 12.500 0 0 1 0 12.500L5 3A6 6 0 0 0 0-6Z" fill="#e8b880"/><circle r="5" fill="#4c94dc" stroke="#eee" stroke-width="1.300"/></g>
<g transform="translate(528 949)"><rect x="-5" y="-7" width="16" height="14" fill="#fff"/><path d="M-4-4L3 1L10-4" fill="none" stroke="#1a70c0" stroke-width="1.500"/><path d="M-10-9L3-12V12L-10 9Z" fill="#0f6ab8"/><text x="-4" y="5" font-size="13" font-weight="bold" fill="#fff" text-anchor="middle">O</text></g>
<g transform="translate(583 949)"><rect x="-13.500" y="-13.500" width="27" height="27" fill="#1860b0"/><path d="M-13.500-13.500H13.500L-13.500 13.500Z" fill="#2a78c8"/><text y="4" font-size="11" font-weight="bold" font-style="italic" fill="#fff" text-anchor="middle">AWR</text></g>
<g transform="translate(638.600 949)"><rect x="-13.500" y="-13.500" width="27" height="27" rx="6" fill="#e8b880"/><path d="M-8 13L0-12L8 13" fill="none" stroke="#2a2420" stroke-width="4.500"/></g>
<g transform="translate(695 949)"><rect x="-13" y="-13.500" width="26" height="27" fill="#a84a44"/><path d="M7-9H-7V-1H7V8H-7" fill="none" stroke="#eee" stroke-width="3"/></g>
<g transform="translate(750 949)"><path d="M-12 2L-3-3L2-11L10 10L5 7L0 13L-3 4Z" fill="#d8503c"/><path d="M-12 2L-3-3L-3 4L-7 6Z" fill="#3a88cc"/></g>
<g transform="translate(806 949)"><rect x="-13.500" y="-13.500" width="27" height="27" fill="#202040"/><rect x="-13.500" y="-13.500" width="27" height="6" fill="#383870"/><rect x="-13.500" y="5.500" width="27" height="8" fill="#ee1c2c"/><path d="M-12 3H-8V-8H-2V3M1 3Q2-8 5-7Q8-8 9 3T13-2" fill="none" stroke="#e8b880" stroke-width="1.500"/></g>
<g transform="translate(862 949)"><rect x="-13.500" y="-13.500" width="27" height="27" fill="#202040"/><rect x="-13.500" y="-13.500" width="27" height="6" fill="#383870"/><rect x="-13.500" y="5.500" width="27" height="8" fill="#ee1c2c"/><path d="M-12 3H-8V-8H-2V3M1 3Q2-8 5-7Q8-8 9 3T13-2" fill="none" stroke="#e8b880" stroke-width="1.500"/></g>
<g transform="translate(918 949)"><rect x="-13.500" y="-13.500" width="27" height="27" rx="2" fill="#e4e8f0" stroke="#7ea0c8"/><rect x="-13.500" y="-13.500" width="27" height="5" fill="#1a7cd0"/><path d="M-10-4H7M-10 0H7M-10 4H7M-10 8H7" stroke="#9aa2b4" stroke-width="1.300"/><rect x="8.500" y="-7" width="3" height="18" fill="#c0c8dc"/></g>
<g transform="translate(973.600 949)"><rect x="-13.500" y="-13.500" width="27" height="27" rx="2" fill="url(#wg)"/><path d="M-12 3L-9-2L-7 5L-4-3L-1 5L1-8L3 5L6-3L8 5L11-2L13 3" fill="none" stroke="#d8402c" stroke-width="1.400"/></g>
<path d="M449 971H495M839 971H877M895 971H941M951 971H997" stroke="#e6eac0" stroke-width="2"/>
<path d="M877 971H886" stroke="#8a8a80" stroke-width="2"/>

<text x="1281" y="954" font-size="14.200" fill="#b4b4a8">Desktop</text>
<path d="M1339 934L1342.500 937.500L1339 941M1344 934L1347.500 937.500L1344 941" fill="none" stroke="#ddd" stroke-width="1.200"/>
<g transform="translate(1382 949)" fill="none" stroke="#e0e0e0" stroke-width="1.300"><circle cx="-4" cy="1" r="3.500"/><circle cx="5" cy="-6" r="3.500"/><path d="M-10 9Q-4 2 2 9M2-1Q6-3 12-1"/></g>
<path d="M1415 953L1422 946L1429 953" fill="none" stroke="#e0e0e0" stroke-width="1.300"/>
<g transform="translate(1449 949)"><rect x="-8" y="-5" width="16" height="11" fill="#eee"/><rect x="8" y="-2" width="2" height="5" fill="#eee"/><rect x="-11" y="-2" width="3" height="2" fill="#eee"/></g>
<g transform="translate(1475 949)" fill="none" stroke="#e0e0e0" stroke-width="1.200"><path d="M-8-3H-4L1-7V7L-4 3H-8Z"/><path d="M4-3Q6 0 4 3M7-5Q10 0 7 5" /><path d="M10-7Q14 0 10 7" stroke="#888"/></g>
<g transform="translate(1503 949)" fill="none" stroke="#d0d0d0" stroke-width="1.300"><path d="M-9 9A13 13 0 0 1 5-7"/><path d="M-4 9A8 8 0 0 1 5-2"/><path d="M0 9A4 4 0 0 1 4 4"/><circle cx="5" cy="9" r="1" fill="#ddd"/></g>
<g transform="translate(1534 949)" fill="none" stroke="#e0e0e0" stroke-width="1.300"><path d="M-9 9Q-7 0-1-6T6-9Q9-6 4 0T-5 10Z"/><path d="M-1 0Q4 2 4 6T11 1"/></g>
<text x="1560" y="955" font-size="13.500" fill="#d8d8d8">ENG</text>

<!-- watermark -->
<text x="1570" y="940" font-size="30" font-weight="bold" fill="#7a3020" opacity=".7" textLength="88">易迪拓</text>
<text x="1660" y="940" font-size="30" font-weight="bold" fill="#4a5a6a" opacity=".75" textLength="58">培训</text>
<path d="M1580 945.500H1720" stroke="#7a7a70" stroke-width="1.500" opacity=".7"/>
<text x="1568" y="965" font-size="16" fill="#55594a" textLength="155">射频和天线设计专家</text>
<text class="tb" x="1605" y="944">10:43 PM</text>
<text class="tb" x="1605" y="965">4/4/2019</text>
<path d="M1683 941H1699V954H1694L1691 957V954H1683Z" fill="none" stroke="#e8e8e8" stroke-width="1.200"/>
</svg>
</body></html>
